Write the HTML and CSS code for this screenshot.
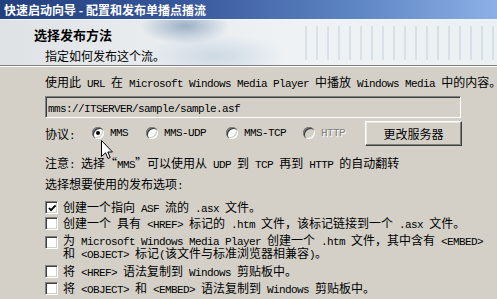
FILE: index.html
```html
<!DOCTYPE html>
<html lang="zh-CN">
<head>
<meta charset="utf-8">
<title>快速启动向导</title>
<link rel="stylesheet" href="styles.css">
</head>
<body>
<div class="win">
  <div class="title">快速启动向导 - 配置和发布单播点播流</div>
  <div class="header">
    <div class="h1">选择发布方法</div>
    <div class="sub">指定如何发布这个流。</div>
  </div>
  <div class="content">
    <div class="line">使用此<span class="m"> URL </span>在<span class="m"> Microsoft Windows Media Player </span>中播放<span class="m"> Windows Media </span>中的内容。</div>
    <div class="textbox"><span class="m">mms://ITSERVER/sample/sample.asf</span></div>
    <div class="proto">
      <span class="plabel">协议<span class="m">:</span></span>
      <span class="opt o1"><span class="radio on"></span><span class="m">MMS</span></span>
      <span class="opt o2"><span class="radio"></span><span class="m">MMS-UDP</span></span>
      <span class="opt o3"><span class="radio"></span><span class="m">MMS-TCP</span></span>
      <span class="opt o4 disabled"><span class="radio"></span><span class="m">HTTP</span></span>
      <button class="btn">更改服务器</button>
    </div>
    <div class="line note">注意<span class="m">: </span>选择“<span class="m">MMS</span>”可以使用从<span class="m"> UDP </span>到<span class="m"> TCP </span>再到<span class="m"> HTTP </span>的自动翻转</div>
    <div class="line sel">选择想要使用的发布选项<span class="m">:</span></div>
    <ul class="rows">
      <li class="row"><span class="cb"><svg width="9" height="9" viewBox="0 0 9 9"><path d="M1 4 L3 6.2 L7.6 1.4" fill="none" stroke="#000" stroke-width="1.8"/></svg></span><span class="txt">创建一个指向<span class="m"> ASF </span>流的<span class="m"> .asx </span>文件。</span></li>
      <li class="row"><span class="cb"></span><span class="txt">创建一个<span class="m"> </span>具有<span class="m"> &lt;HREF&gt; </span>标记的<span class="m"> .htm </span>文件，该标记链接到一个<span class="m"> .asx </span>文件。</span></li>
      <li class="row two"><span class="cb"></span><span class="txt"><span class="tl">为<span class="m"> Microsoft Windows Media Player </span>创建一个<span class="m"> .htm </span>文件，其中含有<span class="m"> &lt;EMBED&gt;</span></span><span class="tl">和<span class="m"> &lt;OBJECT&gt; </span>标记<span class="m">(</span>该文件与标准浏览器相兼容<span class="m">)</span>。</span></span></li>
      <li class="row r4"><span class="cb"></span><span class="txt">将<span class="m"> &lt;HREF&gt; </span>语法复制到<span class="m"> Windows </span>剪贴板中。</span></li>
      <li class="row r5"><span class="cb"></span><span class="txt">将<span class="m"> &lt;OBJECT&gt; </span>和<span class="m"> &lt;EMBED&gt; </span>语法复制到<span class="m"> Windows </span>剪贴板中。</span></li>
    </ul>
  </div>
  <svg class="cursor" width="13" height="21" viewBox="0 0 13 21"><path d="M0.5 0.5 V16.5 L4.5 12.8 L7 18.5 L9.2 17.5 L6.8 12 H11.5 Z" fill="#fff" stroke="#000" stroke-linejoin="miter"/></svg>
</div>
</body>
</html>
```
FILE: styles.css
```css
* { box-sizing: border-box; }
html, body { margin: 0; padding: 0; }
body {
  width: 497px;
  height: 299px;
  overflow: hidden;
  background: #d4d0c8;
  font-family: "Noto Sans CJK SC", sans-serif;
  font-size: 12px;
  color: #000;
}
.win { position: relative; width: 497px; height: 299px; }
.m {
  font-family: "Liberation Mono", monospace;
  font-size: 11px;
  line-height: 1;
  letter-spacing: -0.6px;
  white-space: pre;
}
.title {
  height: 19px;
  line-height: 19px;
  padding-left: 4px;
  color: #fff;
  font-weight: 700;
  font-size: 12px;
  white-space: nowrap;
  background: linear-gradient(90deg, #22407e 0%, #36569a 35%, #5c83c2 70%, #8cb0e6 100%);
}
.header {
  height: 47px;
  padding-top: 8px;
  border-top: 1px solid #f2f4f6;
  border-bottom: 1px solid #808080;
  background:
    repeating-linear-gradient(90deg, rgba(160,180,200,0) 0 5px, rgba(160,180,200,.28) 5px 7px, rgba(160,180,200,0) 7px 11px) 300px 6px / 197px 34px no-repeat,
    radial-gradient(ellipse 45px 18px at 185px 6px, rgba(105,135,170,.6), rgba(105,135,170,0) 100%),
    radial-gradient(ellipse 70px 22px at 215px 36px, rgba(150,175,200,.35), rgba(150,175,200,0) 100%),
    linear-gradient(90deg, #dfe2e5 0%, #e8ecef 30%, #eef2f5 60%, #ebf0f3 100%);
}
.h1 {
  margin-left: 34px;
  height: 13px;
  font-size: 13px;
  font-weight: 700;
  line-height: 13px;
}
.sub {
  margin: 8px 0 0 45px;
  height: 14px;
  line-height: 14px;
}
.content {
  border-top: 1px solid #fff;
  padding: 8px 0 0 45px;
}
.line { height: 14px; line-height: 14px; white-space: nowrap; }
.textbox {
  margin-top: 7px;
  width: 416px;
  height: 22px;
  padding-left: 2px;
  line-height: 20px;
  border: 1px solid;
  border-color: #808080 #fff #fff #808080;
  box-shadow: inset 1px 1px 0 #404040, inset -1px -1px 0 #d4d0c8;
}
.proto {
  margin-top: 2px;
  width: 417px;
  height: 26px;
  display: flex;
  align-items: center;
}
.plabel { width: 47px; }
.opt { display: flex; align-items: center; gap: 6px; }
.o1 { width: 54px; }
.o2 { width: 80px; }
.o3 { width: 77px; }
.radio {
  position: relative;
  width: 12px;
  height: 12px;
  border-radius: 50%;
  background: #fff;
  box-shadow: inset 1px 1px 0 #808080, inset 2px 2px 0 #404040, inset -1px -1px 0 #fff, inset -2px -2px 0 #d4d0c8;
}
.radio.on::after {
  content: "";
  position: absolute;
  left: 4px;
  top: 4px;
  width: 4px;
  height: 4px;
  border-radius: 50%;
  background: #000;
}
.disabled .radio { background: #d4d0c8; }
.disabled .m { color: #808080; text-shadow: 1px 1px 0 #fff; }
.btn {
  margin-left: auto;
  width: 97px;
  height: 25px;
  padding: 0;
  font: inherit;
  color: #000;
  background: #d4d0c8;
  border: 1px solid;
  border-color: #fff #404040 #404040 #fff;
  box-shadow: inset -1px -1px 0 #808080, inset 1px 1px 0 #e8e6e0;
}
.note { margin-top: 10px; }
.sel { margin-top: 7px; }
.rows {
  list-style: none;
  margin: 9px 0 0;
  padding: 0;
  display: flex;
  flex-direction: column;
}
.row {
  display: flex;
  align-items: flex-start;
  height: 14px;
  line-height: 14px;
  margin-top: 2px;
  white-space: nowrap;
}
.row:first-child { margin-top: 0; }
.row.two { height: 28px; padding-top: 1px; }
.txt { display: block; height: 14px; }
.two .txt { height: 26px; }
.tl { display: block; height: 13px; line-height: 13px; }
.row.r4 { margin-top: 4px; }
.row.r5 { margin-top: 3px; }
.cb {
  flex: none;
  width: 13px;
  height: 13px;
  margin-top: 1px;
  margin-right: 5px;
  padding: 2px;
  background: #fff;
  border: 1px solid;
  border-color: #808080 #fff #fff #808080;
  box-shadow: inset 1px 1px 0 #404040, inset -1px -1px 0 #d4d0c8;
}
.two .cb { margin-top: 3px; }
.cb svg { display: block; }
.cursor { position: absolute; left: 101px; top: 140px; }
```
